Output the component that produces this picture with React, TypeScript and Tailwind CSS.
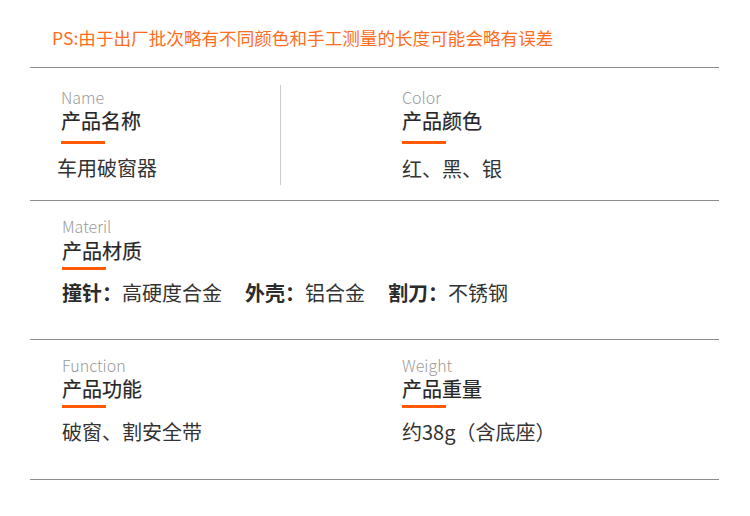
import React from "react";

const FONT = { fontFamily: '"Noto Sans CJK SC", "Noto Sans", sans-serif' };

function Label({ en, zh, gap }: { en: string; zh: string; gap: string }) {
  return (
    <>
      <div className="text-[16px] leading-[16px] font-light text-[#9a9a9a]">{en}</div>
      <div className={`${gap} text-[20px] leading-[20px] font-normal text-[#262626] [-webkit-text-stroke:0.2px_#262626]`}>{zh}</div>
    </>
  );
}

export default function App() {
  return (
    <div className="w-[750px] h-[516px] bg-white" style={FONT}>
      <div className="pt-[28px] pl-[52px] text-[17.6px] leading-[20px] text-[#ff6d22]">
        PS:由于出厂批次略有不同颜色和手工测量的长度可能会略有误差
      </div>
      <div className="mt-[19px] ml-[30px] w-[689px] h-px bg-[#8c8c8c]" />

      {/* Section 1 */}
      <div className="ml-[30px] w-[689px] h-[132px] flex">
        <div className="w-[250px] pl-[31px] pt-[21px]">
          <Label en="Name" zh="产品名称" gap="mt-[6px]" />
          <div className="mt-[10px] w-[44px] h-[3px] bg-[#ff5a00]" />
          <div className="mt-[14px] -ml-[4px] text-[20px] leading-[20px] text-[#333]">车用破窗器</div>
        </div>
        <div className="mt-[17px] w-px h-[100px] bg-[#cccccc]" />
        <div className="pl-[121px] pt-[21px]">
          <Label en="Color" zh="产品颜色" gap="mt-[6px]" />
          <div className="mt-[10px] w-[44px] h-[3px] bg-[#ff5a00]" />
          <div className="mt-[15px] text-[20px] leading-[20px] text-[#333]">红、黑、银</div>
        </div>
      </div>
      <div className="ml-[30px] w-[689px] h-px bg-[#8c8c8c]" />

      {/* Section 2 */}
      <div className="ml-[30px] w-[689px] h-[138px] pl-[32px] pt-[17px]">
        <Label en="Materil" zh="产品材质" gap="mt-[7px]" />
        <div className="mt-[6px] w-[44px] h-[3px] bg-[#ff5a00]" />
        <div className="mt-[13px] flex text-[20px] leading-[20px] text-[#333]">
          <span className="font-bold text-[#2b2b2b]">撞针：</span>
          <span>高硬度合金</span>
          <span className="ml-[23px] font-bold text-[#2b2b2b]">外壳：</span>
          <span>铝合金</span>
          <span className="ml-[23px] font-bold text-[#2b2b2b]">割刀：</span>
          <span>不锈钢</span>
        </div>
      </div>
      <div className="ml-[30px] w-[689px] h-px bg-[#8c8c8c]" />

      {/* Section 3 */}
      <div className="ml-[30px] w-[689px] h-[139px] flex">
        <div className="w-[250px] pl-[32px] pt-[17px]">
          <Label en="Function" zh="产品功能" gap="mt-[6px]" />
          <div className="mt-[6px] w-[44px] h-[3px] bg-[#ff5a00]" />
          <div className="mt-[14px] text-[20px] leading-[20px] text-[#333]">破窗、割安全带</div>
        </div>
        <div className="w-px" />
        <div className="pl-[121px] pt-[17px]">
          <Label en="Weight" zh="产品重量" gap="mt-[6px]" />
          <div className="mt-[6px] w-[44px] h-[3px] bg-[#ff5a00]" />
          <div className="mt-[14px] text-[20px] leading-[20px] text-[#333]">约38g（含底座）</div>
        </div>
      </div>
      <div className="ml-[30px] w-[689px] h-px bg-[#8c8c8c]" />
    </div>
  );
}
